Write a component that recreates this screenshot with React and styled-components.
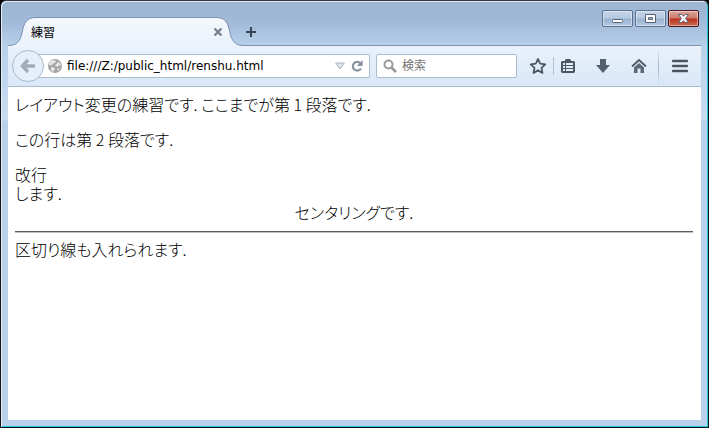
import styled, { createGlobalStyle } from "styled-components";

const GlobalStyle = createGlobalStyle`
    * {
        box-sizing: border-box;
    }

    html,
    body,
    #root {
        height: 100%;
        margin: 0;
    }

    body {
        background: #000;
        overflow: hidden;
    }

    button {
        padding: 0;
        border: 0;
        background: none;
    }
`;

const Window = styled.div`
    display: flex;
    flex-direction: column;
    height: 100%;
    padding: 1px 7px 7px;
    border: 1px solid #101418;
    border-top-color: #33343c;
    border-radius: 6px 6px 0 0;
    background: linear-gradient(#9cb5d3, #a0b9d7 20px, #b9d1ea 46px, #c9dcf0 119px, #b9d1ea 120px);
    box-shadow: inset 1px 1px #e4eef8, inset -1px -1px #21c5dc;
    font-family: "Noto Sans", "Noto Sans CJK JP", sans-serif;
    font-size: 12px;
    color: #000;
`;

const TitleBar = styled.header`
    display: flex;
    flex: none;
    height: 44px;
    align-items: flex-end;
    box-shadow: inset 0 -1px #8093b2;
`;

const Tab = styled.div`
    position: relative;
    display: flex;
    width: 236px;
    height: 30px;
    padding: 2px 21px 0 23px;
    align-items: center;
    justify-content: space-between;
    font-family: "Noto Sans CJK JP", sans-serif;
`;

const TabShape = styled.svg`
    position: absolute;
    inset: 0;
    width: 100%;
    height: 100%;
`;

const TabTitle = styled.span`
    position: relative;
    line-height: 16px;
`;

const TabButton = styled.button`
    position: relative;
    display: flex;
    margin-bottom: ${(props) => (props.$lift ? "8px" : "0")};
    margin-left: ${(props) => (props.$lift ? "1px" : "0")};
`;

const WindowButtons = styled.div`
    display: flex;
    gap: 2px;
    margin: 0 2px 0 auto;
    align-self: flex-start;
    padding-top: 8px;
`;

const WindowButton = styled.button`
    display: flex;
    width: 31px;
    height: 17px;
    align-items: center;
    justify-content: center;
    border: 1px solid ${(props) => (props.$close ? "#4b1523" : "#5c7190")};
    border-radius: 2px;
    background: ${(props) =>
        props.$close
            ? "linear-gradient(#dda69c, #cc7b6c 7px, #b8321c 8px, #ce6a50)"
            : "linear-gradient(#c3d4e8, #b5c9e1 7px, #98b1ce 8px, #b2cae4)"};
    box-shadow: inset 0 0 0 1px rgba(255, 255, 255, 0.45);
`;

const Toolbar = styled.nav`
    display: flex;
    flex: none;
    height: 41px;
    padding-left: 4px;
    align-items: center;
    border-bottom: 1px solid #a9bcd2;
    background: linear-gradient(#eaf2fb, #d9e7f7);
`;

const BackButton = styled.button`
    position: relative;
    display: flex;
    flex: none;
    width: 32px;
    height: 32px;
    align-items: center;
    justify-content: center;
    border: 1px solid #a6bacd;
    border-radius: 50%;
    background: #e6eff9;
`;

const Field = styled.label`
    display: flex;
    height: 24px;
    align-items: center;
    border: 1px solid #a9bcd1;
    border-radius: 2px;
    background: #fff;
`;

const AddressField = styled(Field)`
    flex: 1;
    min-width: 0;
    margin-left: -9px;
    padding: 0 4px 0 11px;
    gap: 4px;
`;

const SearchField = styled(Field)`
    width: 141px;
    margin-left: 6px;
    padding-left: 6px;
    gap: 5px;
`;

const TextBox = styled.input`
    flex: 1;
    width: 0;
    min-width: 0;
    height: 20px;
    padding: 0;
    border: 0;
    outline: 0;
    background: none;
    color: #000;
    font-family: "DejaVu Sans", "Noto Sans CJK JP", sans-serif;
    font-size: 12px;

    &::placeholder {
        color: #757575;
        opacity: 1;
    }
`;

const Tools = styled.div`
    display: flex;
    flex: none;
    height: 100%;
    align-items: center;
    padding-left: 12px;
`;

const ToolButton = styled.button`
    display: flex;
    flex: none;
    width: ${(props) => props.$width || 18}px;
    justify-content: center;
`;

const Divider = styled.span`
    width: 1px;
    height: ${(props) => (props.$tall ? "37px" : "18px")};
    margin: ${(props) => (props.$tall ? "0 0 0 10px" : "0 6px")};
    background: ${(props) =>
        props.$tall ? "linear-gradient(transparent, #9cb0c8, transparent)" : "#b3c3d5"};
`;

const Page = styled.main`
    flex: 1;
    min-height: 0;
    padding: 8px 8px 0 7px;
    background: #fff;
    font-family: "Noto Sans CJK JP", sans-serif;
    font-size: 16px;
    font-weight: 300;
    font-feature-settings: "palt";
    line-height: 19px;
`;

const Paragraph = styled.p`
    margin: 0 0 ${(props) => (props.$tight ? "0" : "16px")};
    text-align: ${(props) => (props.$center ? "center" : "left")};
`;

const Rule = styled.hr`
    height: 2px;
    margin: 9px 0 7px;
    border: 0;
    border-top: 1px solid #5c5c5c;
    border-bottom: 1px solid #c0c0c0;
`;

function App() {
    return (
        <>
            <GlobalStyle />
            <Window>
                <TitleBar>
                    <Tab>
                        <TabShape viewBox='0 0 236 30' preserveAspectRatio='none'>
                            <defs>
                                <linearGradient id='tabFill' x2='0' y2='1'>
                                    <stop stopColor='#f4f8fc' />
                                    <stop offset='1' stopColor='#eaf2fb' />
                                </linearGradient>
                            </defs>
                            <path
                                d='M0 30V29.5C8 29.5 12 26 14 17C16 6 19 1.5 28 1.5H208C217 1.5 220 6 222 17C224 26 228 29.5 236 29.5V30Z'
                                fill='url(#tabFill)'
                            />
                            <path
                                d='M0 29.5C8 29.5 12 26 14 17C16 6 19 1.5 28 1.5H208C217 1.5 220 6 222 17C224 26 228 29.5 236 29.5'
                                fill='none'
                                stroke='#7c91b1'
                            />
                        </TabShape>
                        <TabTitle>練習</TabTitle>
                        <TabButton aria-label='Close tab'>
                            <svg width='10' height='10' viewBox='0 0 10 10'>
                                <path d='M1.5 1.5L8.5 8.5M8.5 1.5L1.5 8.5' stroke='#77828f' strokeWidth='2.4' />
                            </svg>
                        </TabButton>
                    </Tab>
                    <TabButton $lift aria-label='New tab'>
                        <svg width='12' height='12' viewBox='0 0 12 12'>
                            <path d='M6 1V11M1 6H11' stroke='#394550' strokeWidth='2' />
                        </svg>
                    </TabButton>
                    <WindowButtons>
                        <WindowButton aria-label='Minimize'>
                            <svg width='13' height='13' viewBox='0 0 13 13'>
                                <rect x='1.5' y='7.5' width='10' height='3' rx='1' fill='#fff' stroke='#5a6275' />
                            </svg>
                        </WindowButton>
                        <WindowButton aria-label='Maximize'>
                            <svg width='13' height='13' viewBox='0 0 13 13'>
                                <path
                                    d='M1.5 2.5H11.5V10.5H1.5ZM4.5 5.5V7.5H8.5V5.5Z'
                                    fill='#fff'
                                    fillRule='evenodd'
                                    stroke='#5a6275'
                                />
                            </svg>
                        </WindowButton>
                        <WindowButton $close aria-label='Close'>
                            <svg width='13' height='13' viewBox='0 0 13 13'>
                                <path
                                    d='M1.5 2.5H4.8L6.5 4.3L8.2 2.5H11.5L8.5 6.5L11.5 10.5H8.2L6.5 8.7L4.8 10.5H1.5L4.5 6.5Z'
                                    fill='#fff'
                                    stroke='#626071'
                                />
                            </svg>
                        </WindowButton>
                    </WindowButtons>
                </TitleBar>
                <Toolbar>
                    <BackButton aria-label='Back'>
                        <svg width='16' height='16' viewBox='0 0 16 16'>
                            <path
                                d='M8 2L2.5 8L8 14M3 8H15'
                                fill='none'
                                stroke='#a1acb8'
                                strokeWidth='3.4'
                            />
                        </svg>
                    </BackButton>
                    <AddressField>
                        <svg width='16' height='16' viewBox='0 0 16 16'>
                            <circle cx='8' cy='8' r='7' fill='#a5a5a5' />
                            <path
                                d='M3 3.5L6 2L9 3L8 5L6 5.5L5 7L3 7.5L1.8 6ZM10 3L13 5L14 8L12 7L11 9L8 8L9 6L11 5ZM4 9L7 9.5L8 11L6 14L4 12.5ZM10 11L13 10L11 13Z'
                                fill='#e6e6e6'
                            />
                        </svg>
                        <TextBox
                            aria-label='Address'
                            defaultValue='file:///Z:/public_html/renshu.html'
                            spellCheck={false}
                        />
                        <svg width='10' height='8' viewBox='0 0 10 8'>
                            <path d='M.7 1H9.3L5 7Z' fill='#dfe5eb' stroke='#a9b2bd' />
                        </svg>
                        <ToolButton $width={16} aria-label='Reload'>
                            <svg width='14' height='14' viewBox='0 0 14 14'>
                                <path
                                    d='M10.5 4.2A4.4 4.4 0 1 0 11 9.5'
                                    fill='none'
                                    stroke='#8793a0'
                                    strokeWidth='2.2'
                                />
                                <path d='M12.6 1V7H6.8Z' fill='#8793a0' />
                            </svg>
                        </ToolButton>
                    </AddressField>
                    <SearchField>
                        <svg width='14' height='14' viewBox='0 0 14 14'>
                            <circle cx='5.5' cy='5.5' r='4' fill='none' stroke='#999' strokeWidth='2' />
                            <path d='M8.5 8.5L13 13' stroke='#999' strokeWidth='2.6' />
                        </svg>
                        <TextBox aria-label='Search' placeholder='検索' />
                    </SearchField>
                    <Tools>
                        <ToolButton aria-label='Bookmark this page'>
                            <svg width='18' height='18' viewBox='0 0 18 18'>
                                <path
                                    d='M9 2L11.2 6.7L16.3 7.3L12.5 10.8L13.5 16L9 13.4L4.5 16L5.5 10.8L1.7 7.3L6.8 6.7Z'
                                    fill='none'
                                    stroke='#4c5864'
                                    strokeWidth='1.8'
                                    strokeLinejoin='round'
                                />
                            </svg>
                        </ToolButton>
                        <Divider />
                        <ToolButton $width={16} aria-label='Bookmarks'>
                            <svg width='16' height='16' viewBox='0 0 16 16'>
                                <path
                                    d='M5 3V2L6 1H10L11 2V3H14L15 4V14L14 15H2L1 14V4L2 3Z'
                                    fill='#4c5864'
                                />
                                <path
                                    d='M3 5H5V7H3ZM6 5H13V7H6ZM3 8H5V10H3ZM6 8H13V10H6ZM3 11H5V13H3ZM6 11H13V13H6Z'
                                    fill='#e3edf8'
                                />
                            </svg>
                        </ToolButton>
                        <ToolButton $width={54} aria-label='Downloads'>
                            <svg width='16' height='16' viewBox='0 0 16 16'>
                                <path d='M5 1H11V7H15L8 15L1 7H5Z' fill='#53606d' />
                            </svg>
                        </ToolButton>
                        <ToolButton aria-label='Home'>
                            <svg width='16' height='16' viewBox='0 0 16 16'>
                                <path d='M1 8.5L8 2L15 8.5' fill='none' stroke='#4c5864' strokeWidth='1.8' />
                                <path d='M3 9.5L8 5L13 9.5V15H9.5V10.5H6.5V15H3Z' fill='#5b6875' />
                            </svg>
                        </ToolButton>
                        <Divider $tall />
                        <ToolButton $width={42} aria-label='Menu'>
                            <svg width='16' height='14' viewBox='0 0 16 14'>
                                <path
                                    d='M1 2H15M1 7H15M1 12H15'
                                    stroke='#48535f'
                                    strokeWidth='2.4'
                                    strokeLinecap='round'
                                />
                            </svg>
                        </ToolButton>
                    </Tools>
                </Toolbar>
                <Page>
                    <Paragraph>レイアウト変更の練習です. ここまでが第 1 段落です.</Paragraph>
                    <Paragraph>この行は第 2 段落です.</Paragraph>
                    <Paragraph $tight>
                        改行
                        <br />
                        します.
                    </Paragraph>
                    <Paragraph $tight $center>
                        センタリングです.
                    </Paragraph>
                    <Rule />
                    <Paragraph $tight>区切り線も入れられます.</Paragraph>
                </Page>
            </Window>
        </>
    );
}

export default App;
